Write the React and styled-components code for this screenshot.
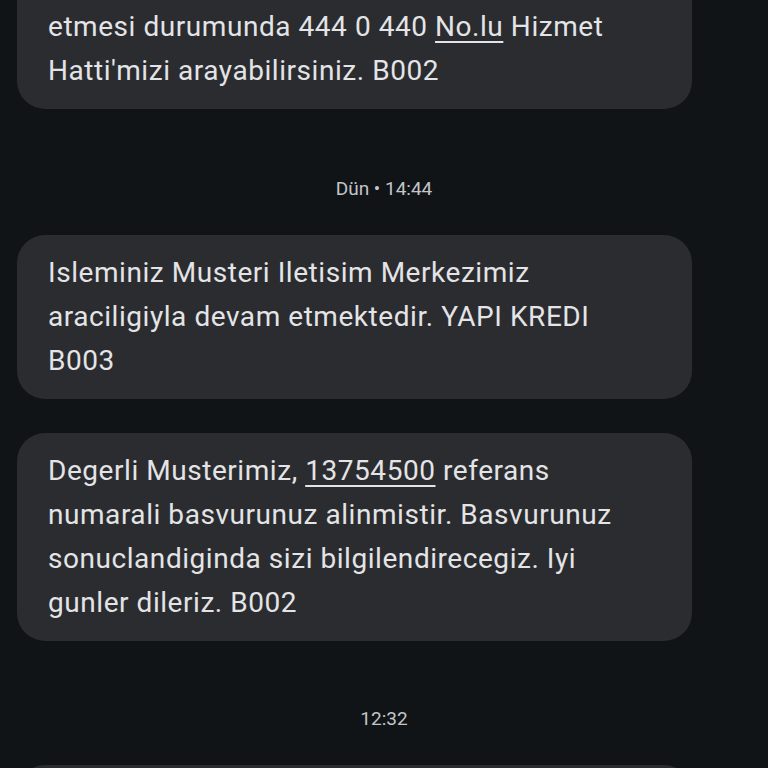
import styled, { createGlobalStyle } from 'styled-components';

const Global = createGlobalStyle`
    html, body {
        margin: 0;
        padding: 0;
        background: #111417;
    }
    body {
        font-family: Roboto, "Noto Sans", "Liberation Sans", sans-serif;
        overflow: hidden;
    }
`

const Screen = styled.main`
    width: 768px;
    height: 768px;
    overflow: hidden;
    display: flex;
    flex-direction: column;
    padding: 0 76px 0 17px;
    box-sizing: border-box;
`

const Bubble = styled.div`
    background: #2a2c30;
    color: #e4e4e6;
    font-size: 28px;
    line-height: 44px;
    border-radius: 28px;
    padding: ${p => (p.$cut ? '45px' : '16px')} 31px 16px 31px;
    margin-top: ${p => (p.$cut ? '-40px' : '0')};
    margin-bottom: ${p => p.$gap || 0}px;
    letter-spacing: 0.55px;
    flex-shrink: 0;
`

const Link = styled.span`
    text-decoration: underline;
    text-decoration-thickness: 2px;
    text-underline-offset: 5px;
`

// centred on the whole screen, not on the bubble column
const Stamp = styled.div`
    text-align: center;
    color: #c3c5c9;
    font-size: 19px;
    line-height: 24px;
    margin: ${p => p.$top}px -76px 34px -17px;
    flex-shrink: 0;
`

function App() {
    return (
        <>
            <Global />
            <Screen>
                <Bubble $cut>
                    etmesi durumunda 444 0 440 <Link>No.lu</Link> Hizmet
                    <br />
                    Hatti'mizi arayabilirsiniz. B002
                </Bubble>

                <Stamp $top={68}>Dün • 14:44</Stamp>

                <Bubble $gap={34}>
                    Isleminiz Musteri Iletisim Merkezimiz araciligiyla devam etmektedir. YAPI KREDI B003
                </Bubble>

                <Bubble>
                    Degerli Musterimiz, <Link>13754500</Link> referans numarali basvurunuz alinmistir. Basvurunuz sonuclandiginda sizi bilgilendirecegiz. Iyi gunler dileriz. B002
                </Bubble>

                <Stamp $top={66}>12:32</Stamp>

                <Bubble>&nbsp;</Bubble>
            </Screen>
        </>
    )
}

export default App
